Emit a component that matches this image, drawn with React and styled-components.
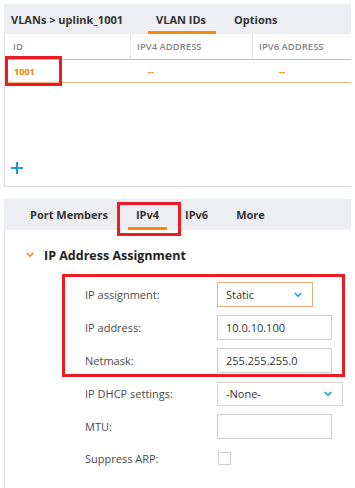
import React from 'react';
import styled, { createGlobalStyle } from 'styled-components';

const GlobalStyle = createGlobalStyle`
  body {
    margin: 0;
    background: #fff;
    font-family: 'Open Sans', 'Liberation Sans', sans-serif;
    color: #333;
  }
`;

const App = () => {
  return (
    <>
      <GlobalStyle />
      <Page>
        <ListPanel>
          <TabBar>
            <Crumb>VLANs &gt; uplink_1001</Crumb>
            <Tab active>VLAN IDs</Tab>
            <Tab>Options</Tab>
          </TabBar>
          <HeadRow>
            <HeadCell width={125}>ID</HeadCell>
            <HeadCell width={122} divider>IPV4 ADDRESS</HeadCell>
            <HeadCell divider>IPV6 ADDRESS</HeadCell>
          </HeadRow>
          <DataRow>
            <DataCell width={125}>
              1001
              <Highlight top={-4} left={0} width={57} height={30} />
            </DataCell>
            <DataCell width={122}>--</DataCell>
            <DataCell>--</DataCell>
          </DataRow>
          <AddButton aria-label="add">
            <svg width="14" height="14" viewBox="0 0 14 14">
              <path d="M7 1v12M1 7h12" stroke="#1d9ad6" strokeWidth="2" />
            </svg>
          </AddButton>
        </ListPanel>

        <SubTabBar>
          <SubTab>Port Members</SubTab>
          <SubTab active>
            IPv4
            <Highlight top={3} left={-11} width={64} height={34} />
          </SubTab>
          <SubTab>IPv6</SubTab>
          <SubTab>More</SubTab>
        </SubTabBar>

        <DetailPanel>
          <SectionTitle>
            <svg width="8" height="6" viewBox="0 0 8 6">
              <path d="M0.8 1l3.2 3.2L7.2 1" fill="none" stroke="#f5870f" strokeWidth="1.6" />
            </svg>
            IP Address Assignment
          </SectionTitle>
          <Form>
            <HighlightGroup>
              <Highlight top={-8} left={-23} width={283} height={103} />
              <Row>
                <Label>IP assignment:</Label>
                <Select width={96} focused>
                  Static
                  <Chevron />
                </Select>
              </Row>
              <Row>
                <Label>IP address:</Label>
                <Input width={115}>10.0.10.100</Input>
              </Row>
              <Row>
                <Label>Netmask:</Label>
                <Input width={115}>255.255.255.0</Input>
              </Row>
            </HighlightGroup>
            <Row>
              <Label>IP DHCP settings:</Label>
              <Select width={126} height={24}>
                -None-
                <Chevron />
              </Select>
            </Row>
            <Row>
              <Label>MTU:</Label>
              <Input width={115} />
            </Row>
            <Row compact>
              <Label>Suppress ARP:</Label>
              <Checkbox />
            </Row>
          </Form>
        </DetailPanel>
      </Page>
    </>
  );
};

const Chevron = () => (
  <ChevronIcon width="8" height="6" viewBox="0 0 8 6">
    <path d="M0.8 1l3.2 3.2L7.2 1" fill="none" stroke="#1d9ad6" strokeWidth="1.6" />
  </ChevronIcon>
);

export default App;

const Page = styled.div`
  width: 347px;
  padding: 4px 0 0 4px;
  display: flex;
  flex-direction: column;
`;

const ListPanel = styled.div`
  height: 182px;
  border-left: 1px solid #dedede;
  border-bottom: 1px solid #dedede;
  display: flex;
  flex-direction: column;
`;

const TabBar = styled.div`
  height: 30px;
  background: #eceef1;
  display: flex;
  align-items: stretch;
  padding-left: 7px;
  margin-left: -1px;
`;

const Crumb = styled.span`
  font-size: 11px;
  font-weight: 700;
  display: flex;
  align-items: center;
  margin-right: 25px;
  white-space: nowrap;
`;

const Tab = styled.span`
  font-size: 11px;
  font-weight: 700;
  display: flex;
  align-items: center;
  padding: 3px 10px 0 8px;
  margin-right: 10px;
  border-bottom: 3px solid ${p => (p.active ? '#f6890e' : 'transparent')};
`;

const HeadRow = styled.div`
  height: 25px;
  display: flex;
  border-bottom: 1px solid #f3b47d;
`;

const HeadCell = styled.div`
  ${p => (p.width ? `width: ${p.width}px;` : 'flex: 1;')}
  box-sizing: border-box;
  border-left: ${p => (p.divider ? '1px solid #e6e6e6' : 'none')};
  padding-left: ${p => (p.divider ? '6px' : '8px')};
  display: flex;
  align-items: center;
  font-size: 9.5px;
  font-weight: 600;
  color: #858585;
`;

const DataRow = styled.div`
  height: 22px;
  display: flex;
  border-bottom: 1px solid #f3b47d;
`;

const DataCell = styled.div`
  ${p => (p.width ? `width: ${p.width}px;` : 'flex: 1;')}
  position: relative;
  padding-left: 9px;
  display: flex;
  align-items: center;
  font-size: 9px;
  font-weight: 700;
  color: #f5820a;
`;

const Highlight = styled.span`
  position: absolute;
  top: ${p => p.top}px;
  left: ${p => p.left}px;
  width: ${p => p.width}px;
  height: ${p => p.height}px;
  box-sizing: border-box;
  border: 3px solid #ec1c24;
  pointer-events: none;
`;

const AddButton = styled.div`
  margin-top: auto;
  margin-bottom: 11px;
  margin-left: 5px;
  width: 14px;
  height: 14px;
  display: flex;
`;

const SubTabBar = styled.div`
  margin-top: 12px;
  height: 31px;
  background: #eceef1;
  display: flex;
  align-items: stretch;
  padding-left: 18px;
`;

const SubTab = styled.span`
  position: relative;
  font-size: 11px;
  font-weight: 700;
  display: flex;
  align-items: center;
  padding: 3px 8px 0;
  margin-right: ${p => (p.active ? '10px' : '12px')};
  border-bottom: 3px solid ${p => (p.active ? '#f6890e' : 'transparent')};
`;

const DetailPanel = styled.div`
  border-left: 1px solid #dedede;
  padding: 15px 0 30px;
  display: flex;
  flex-direction: column;
`;

const SectionTitle = styled.div`
  display: flex;
  align-items: center;
  gap: 10px;
  padding-left: 21px;
  font-size: 12.5px;
  font-weight: 700;
  color: #222;
  height: 20px;
`;

const Form = styled.div`
  margin-top: 17px;
  padding-left: 80px;
  display: flex;
  flex-direction: column;
  gap: 8px;
`;

const HighlightGroup = styled.div`
  position: relative;
  display: flex;
  flex-direction: column;
  gap: 8px;
`;

const Row = styled.div`
  display: grid;
  grid-template-columns: 132px auto;
  align-items: center;
  min-height: ${p => (p.compact ? '20px' : '25px')};
  margin-top: ${p => (p.compact ? '1px' : '0')};
`;

const Label = styled.span`
  font-size: 11px;
  color: #4a4a4a;
`;

const Select = styled.div`
  width: ${p => p.width}px;
  height: ${p => p.height || 25}px;
  box-sizing: border-box;
  border: 1px solid ${p => (p.focused ? '#e6ad78' : '#d6d6d6')};
  display: flex;
  align-items: center;
  padding: 0 10px 0 8px;
  font-size: 11px;
  color: #333;
`;

const ChevronIcon = styled.svg`
  margin-left: auto;
`;

const Input = styled.div`
  width: ${p => p.width}px;
  height: 25px;
  box-sizing: border-box;
  border: 1px solid #cfcfcf;
  display: flex;
  align-items: center;
  padding-left: 8px;
  font-size: 11px;
  color: #333;
`;

const Checkbox = styled.span`
  width: 13px;
  height: 13px;
  margin-left: 1px;
  box-sizing: border-box;
  border: 1px solid #cfcfcf;
`;
